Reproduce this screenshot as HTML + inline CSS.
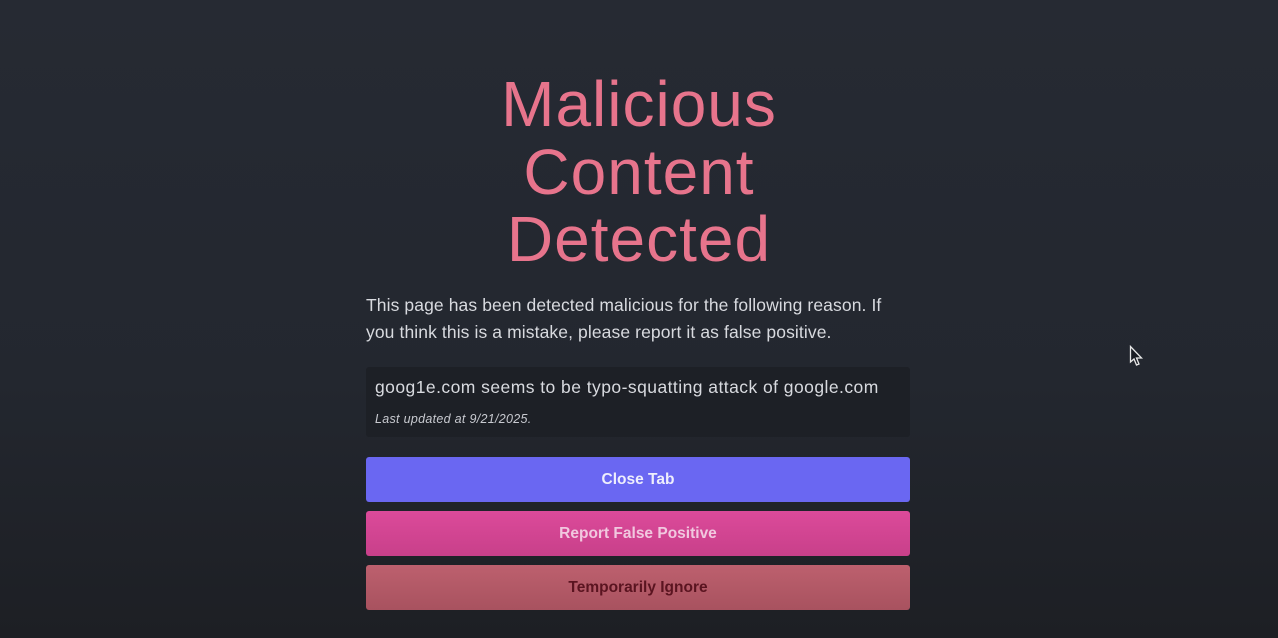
<!DOCTYPE html>
<html><head><style>
html,body{margin:0;padding:0;}
body{width:1278px;height:638px;overflow:hidden;background:linear-gradient(180deg,#262a33 0%,#23272f 60%,#1d1f24 100%);font-family:"Liberation Sans",sans-serif;position:relative;}
h1{position:absolute;left:0;width:1278px;top:71px;margin:0;text-align:center;color:#e7748c;font-weight:normal;font-size:64px;line-height:67.5px;letter-spacing:1px;}
p{position:absolute;left:366px;top:292px;width:540px;margin:0;color:#d8dadf;font-size:17.5px;line-height:27px;letter-spacing:0.1px;}
.box{position:absolute;left:366px;top:367px;width:544px;height:70px;background:#1d2026;border-radius:3px;}
.box .a{position:absolute;left:9px;top:10px;color:#d8dadf;font-size:17.5px;letter-spacing:0.45px;}
.box .b{position:absolute;left:9px;top:45px;color:#c8cad0;font-size:12.5px;font-style:italic;letter-spacing:0.3px;}
.btn{position:absolute;left:366px;width:544px;height:45px;border-radius:3px;text-align:center;line-height:45px;font-size:15.5px;font-weight:bold;}
</style></head><body>
<h1>Malicious<br>Content<br>Detected</h1>
<p>This page has been detected malicious for the following reason. If you think this is a mistake, please report it as false positive.</p>
<div class="box"><div class="a">goog1e.com seems to be typo-squatting attack of google.com</div><div class="b">Last updated at 9/21/2025.</div></div>
<div class="btn" style="top:457px;background:#6a67f2;color:#eeeefc">Close Tab</div>
<div class="btn" style="top:511px;background:linear-gradient(#dc4a9a,#c8408a);color:#f1c8df">Report False Positive</div>
<div class="btn" style="top:565px;background:linear-gradient(#bd606e,#a8525f);color:#5a1420">Temporarily Ignore</div>
<svg style="position:absolute;left:1129px;top:345px" width="16" height="24" viewBox="0 0 16 24"><path d="M1.5 1.5 L1.5 17 L5 14 L7.5 20 L10 19 L7.5 13 L12.5 13 Z" fill="#1a1d24" stroke="#e8e8e8" stroke-width="1.3"/></svg>
</body></html>
